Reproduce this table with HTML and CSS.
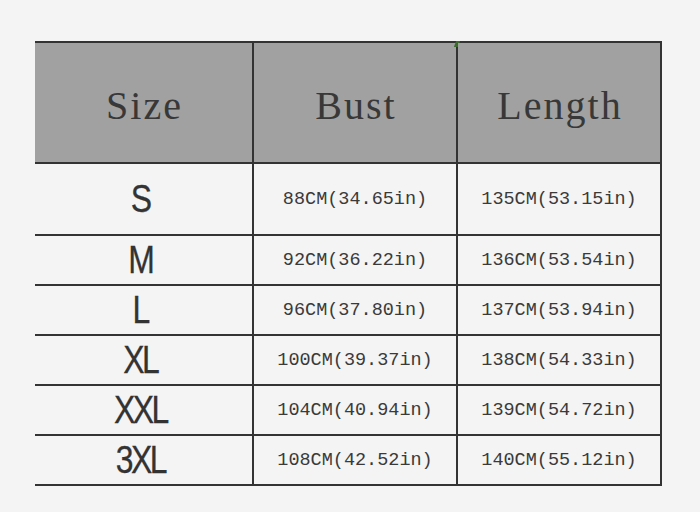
FILE: index.html
```html
<!DOCTYPE html>
<html>
<head>
<meta charset="utf-8">
<link rel="stylesheet" href="styles.css">
</head>
<body>
<div class="chart">
  <div class="cell head">Size</div>
  <div class="cell head">Bust<span class="mark"></span></div>
  <div class="cell head last">Length</div>

  <div class="cell size"><span>S</span></div>
  <div class="cell val">88CM(34.65in)</div>
  <div class="cell val last">135CM(53.15in)</div>

  <div class="cell size"><span>M</span></div>
  <div class="cell val">92CM(36.22in)</div>
  <div class="cell val last">136CM(53.54in)</div>

  <div class="cell size"><span>L</span></div>
  <div class="cell val">96CM(37.80in)</div>
  <div class="cell val last">137CM(53.94in)</div>

  <div class="cell size"><span>XL</span></div>
  <div class="cell val">100CM(39.37in)</div>
  <div class="cell val last">138CM(54.33in)</div>

  <div class="cell size"><span>XXL</span></div>
  <div class="cell val">104CM(40.94in)</div>
  <div class="cell val last">139CM(54.72in)</div>

  <div class="cell size"><span>3XL</span></div>
  <div class="cell val">108CM(42.52in)</div>
  <div class="cell val last">140CM(55.12in)</div>
</div>
</body>
</html>
```
FILE: styles.css
```css
html, body {
  margin: 0;
  padding: 0;
  background: #f4f4f4;
}

.chart {
  margin: 41px 0 0 35px;
  width: 627px;
  display: grid;
  grid-template-columns: 219px 204px 204px;
  grid-template-rows: 121px 72px 50px 50px 50px 50px 50px;
  border-top: 2px solid #333;
}

.cell {
  box-sizing: border-box;
  border-right: 2px solid #333;
  border-bottom: 2px solid #333;
  display: flex;
  align-items: center;
  justify-content: center;
  color: #333;
  position: relative;
}

.head {
  background: #a1a1a1;
  font-family: "Liberation Serif", serif;
  font-size: 40px;
  letter-spacing: 2px;
  color: #383838;
  padding-top: 6px;
  padding-left: 2px;
}

.size {
  font-family: "Liberation Sans", Arial, sans-serif;
  font-size: 38px;
  padding-right: 6px;
}

.size span {
  display: inline-block;
  transform: scaleX(0.84);
  letter-spacing: -3px;
  -webkit-text-stroke: 0.3px #333;
}

.val {
  font-family: "Liberation Mono", monospace;
  font-size: 18.5px;
  color: #3a3a3a;
}

.mark {
  position: absolute;
  right: -3px;
  top: -2px;
  width: 4px;
  height: 6px;
  background: #3d6b2e;
  transform: skewX(-20deg);
}
```
